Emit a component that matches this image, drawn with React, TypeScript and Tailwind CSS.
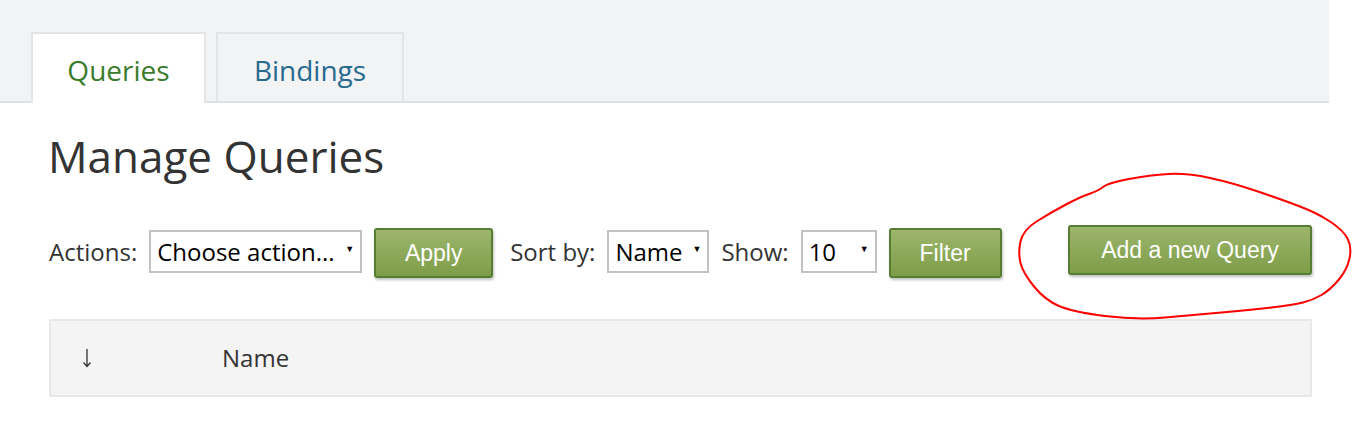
import React from "react";

const pts: [number, number][] = [
  [1098, 191], [1108, 183], [1150, 175], [1187, 173], [1233, 183], [1283, 200],
  [1317, 213], [1343, 230], [1352, 247], [1347, 270], [1330, 290], [1313, 300],
  [1293, 305], [1250, 310], [1193, 315], [1137, 320], [1073, 312], [1045, 300],
  [1023, 273], [1018, 253], [1023, 230], [1050, 213], [1080, 197],
];

function smoothClosed(p: [number, number][]) {
  const n = p.length;
  const mid = (a: [number, number], b: [number, number]) => [(a[0] + b[0]) / 2, (a[1] + b[1]) / 2];
  const m0 = mid(p[n - 1], p[0]);
  let d = `M ${m0[0]} ${m0[1]}`;
  for (let i = 0; i < n; i++) {
    const c = p[i];
    const m = mid(p[i], p[(i + 1) % n]);
    d += ` Q ${c[0]} ${c[1]} ${m[0]} ${m[1]}`;
  }
  return d;
}

const font = { fontFamily: '"Open Sans", "Noto Sans", sans-serif' };

function Select({ text, w }: { text: string; w: string }) {
  return (
    <div
      className={`${w} h-[43px] border-2 border-[#c2c2c2] bg-white flex items-center justify-between pl-[6px] pr-[6px] text-[24px] text-black`}
    >
      <span className="leading-none">{text}</span>
      <span className="text-[9px] leading-none mb-[6px]">▼</span>
    </div>
  );
}

function GreenButton({ text, w, extra = "" }: { text: string; w: string; extra?: string }) {
  return (
    <button
      className={`${w} h-[50px] rounded-[3px] border-2 border-[#567d33] bg-gradient-to-b from-[#9cb66c] to-[#7e9d48] text-white text-[23px] shadow-[1px_2px_3px_rgba(0,0,0,0.25)] ${extra}`}
      style={{ fontFamily: '"Liberation Sans", Arial, sans-serif' }}
    >
      {text}
    </button>
  );
}

export default function App() {
  return (
    <div className="relative w-[1353px] h-[428px] bg-white overflow-hidden" style={font}>
      <div className="w-[1329px] h-[103px] bg-[#f2f3f5] border-b-2 border-[#dfe0e2] flex items-end pl-[31px] gap-[10px]">
        <div className="w-[175px] h-[71px] -mb-[2px] bg-white border-2 border-b-0 border-[#e2e4e6] flex items-center justify-center pt-[2px] text-[28px] text-[#3b7b2c]">
          Queries
        </div>
        <div className="w-[188px] h-[69px] border-2 border-b-0 border-[#e2e4e6] flex items-center justify-center pt-[4px] text-[28px] text-[#286a8e]">
          Bindings
        </div>
      </div>

      <div className="pl-[49px] pr-[41px]">
        <h1 className="mt-[23px] text-[44px] leading-[60px] text-[#333] -ml-[1px]">Manage Queries</h1>

        <div className="mt-[39px] flex items-center text-[24px] text-[#333]">
          <span>Actions:</span>
          <div className="ml-[12px]">
            <Select text="Choose action..." w="w-[213px]" />
          </div>
          <GreenButton text="Apply" w="w-[119px]" extra="ml-[12px] mt-[3px]" />
          <span className="ml-[17px]">Sort by:</span>
          <div className="ml-[12px]">
            <Select text="Name" w="w-[102px]" />
          </div>
          <span className="ml-[12px]">Show:</span>
          <div className="ml-[12px]">
            <Select text="10" w="w-[76px]" />
          </div>
          <GreenButton text="Filter" w="w-[113px]" extra="ml-[12px] mt-[3px]" />
          <GreenButton text="Add a new Query" w="w-[244px]" extra="ml-auto -mt-[3px]" />
        </div>

        <div className="mt-[41px] h-[78px] border-2 border-[#e8e8e8] bg-[#f4f4f4] flex items-center text-[24px] text-[#333]">
          <span className="ml-[31px] w-[140px] flex items-center">
            <svg width="10" height="20" viewBox="0 0 10 20">
              <path d="M5 1 V18 M1.5 14.5 L5 18.5 L8.5 14.5" fill="none" stroke="#333" strokeWidth="1.3" />
            </svg>
          </span>
          <span>Name</span>
        </div>
      </div>

      <svg className="absolute left-0 top-0 pointer-events-none" width="1353" height="428" viewBox="0 0 1353 428">
        <path d={smoothClosed(pts)} fill="none" stroke="#ff0000" strokeWidth="2" strokeLinejoin="round" />
      </svg>
    </div>
  );
}
